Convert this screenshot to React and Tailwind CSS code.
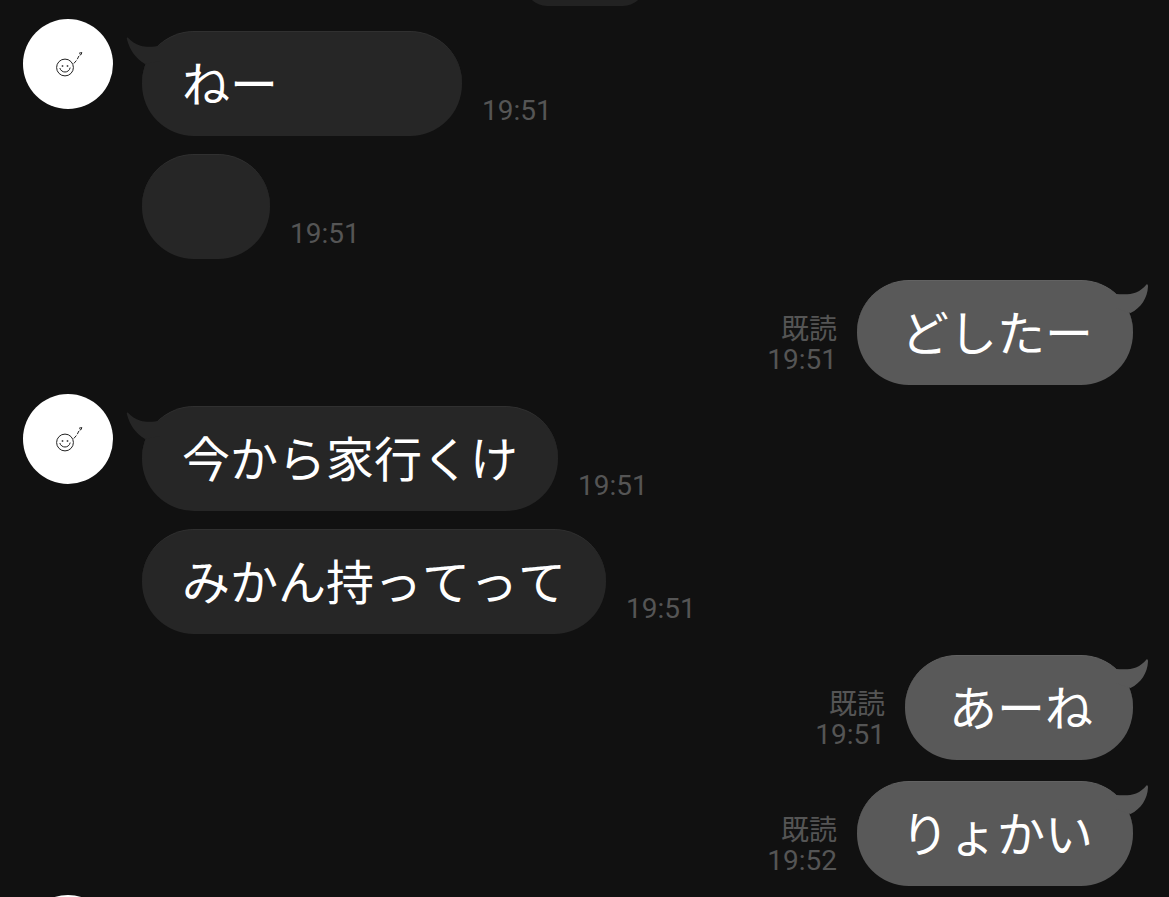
import React from "react";
import clsx from "clsx";

const messages = [
  { id: 1, from: "friend", first: true, text: "ねー　　　", time: "19:51" },
  { id: 2, from: "friend", text: "　", time: "19:51" },
  { id: 3, from: "me", first: true, text: "どしたー", time: "19:51" },
  { id: 4, from: "friend", first: true, text: "今から家行くけ", time: "19:51" },
  { id: 5, from: "friend", text: "みかん持ってって", time: "19:51" },
  { id: 6, from: "me", first: true, text: "あーね", time: "19:51" },
  { id: 7, from: "me", first: true, text: "りょかい", time: "19:52" },
];

function Avatar() {
  return (
    <div className="-mt-3 size-[90px] rounded-full bg-white">
      <svg viewBox="0 0 90 90" fill="none" stroke="#222" strokeWidth="1" className="size-full">
        <circle cx="42" cy="48.5" r="8.4" />
        <path d="M36.800 49c.8 2.700 3 4 5.200 4s4.600-1.400 5.200-4.400" />
        <path d="M39.500 46.200v1.600M44.500 46.200v1.600" strokeWidth="1.500" />
        <path d="M50.800 44.500l2.600-3M54.300 40.200l1.600-3.200M56 34.300l2.800-.8-.6 2-1.600.6" />
      </svg>
    </div>
  );
}

function Tail({ mine }) {
  return (
    <svg
      viewBox="0 0 36 32"
      className={clsx(
        "absolute h-8 w-9",
        mine ? "-right-[15px] top-[3px] text-[#595959]" : "-left-4 top-[5px] text-[#262626]"
      )}
    >
      <path
        fill="currentColor"
        d={
          mine
            ? "M34.500 .5C35.500 0 36 1 36 2.500C35.500 14 29 24 18.500 29L4 24V10C12 10.600 19 10.500 24 8.500C28.500 6.500 31.500 4 34.500 .5Z"
            : "M2 .8C1 0 .5 .8 1 2.500C4 13.500 9.500 21 19 27L34 24V8.500C28 10.200 20 10.300 14.500 8.800C9 7.200 5.500 4.500 2 .8Z"
        }
      />
    </svg>
  );
}

function Bubble({ mine, first, text }) {
  return (
    <div
      className={clsx(
        "relative h-[105px] rounded-[52px] border-t pt-4 pr-10 text-5xl leading-[66px] whitespace-pre text-white [font-kerning:none]",
        mine ? "border-[#626262] bg-[#595959] pl-11" : "border-[#303030] bg-[#262626] pl-10"
      )}
    >
      {first && <Tail mine={mine} />}
      <p>{text}</p>
    </div>
  );
}

function Meta({ mine, time }) {
  return (
    <div className="pb-2.5 text-right font-['Roboto','Noto_Sans_CJK_JP',sans-serif] text-[28px] leading-[30px] text-[#555]">
      {mine && <p>既読</p>}
      <time className="block">{time}</time>
    </div>
  );
}

function Message({ message, previous }) {
  const { from, first, text, time } = message;
  const mine = from === "me";

  return (
    <li className={clsx("flex", mine && "justify-end pr-9", previous && (first ? "mt-[21px]" : "mt-[18px]"))}>
      {!mine && <div className="w-[142px] shrink-0 pl-[23px]">{first && <Avatar />}</div>}
      <div className={clsx("flex items-end gap-5", mine && "flex-row-reverse")}>
        <Bubble mine={mine} first={first} text={text} />
        <Meta mine={mine} time={time} />
      </div>
    </li>
  );
}

export default function App() {
  return (
    <main className="h-screen overflow-hidden bg-[#111] font-['Noto_Sans_CJK_JP',sans-serif]">
      {/* bottom edge of the date label, scrolled up */}
      <div className="flex h-1.5 items-end justify-center overflow-hidden">
        <div className="h-11 w-[120px] shrink-0 rounded-full bg-[#222]" />
      </div>
      <ul className="pt-[25px]">
        {messages.map((message, i) => (
          <Message key={message.id} message={message} previous={messages[i - 1]} />
        ))}
        <li className="mt-[21px] flex pl-[23px]">
          <Avatar />
        </li>
      </ul>
    </main>
  );
}
